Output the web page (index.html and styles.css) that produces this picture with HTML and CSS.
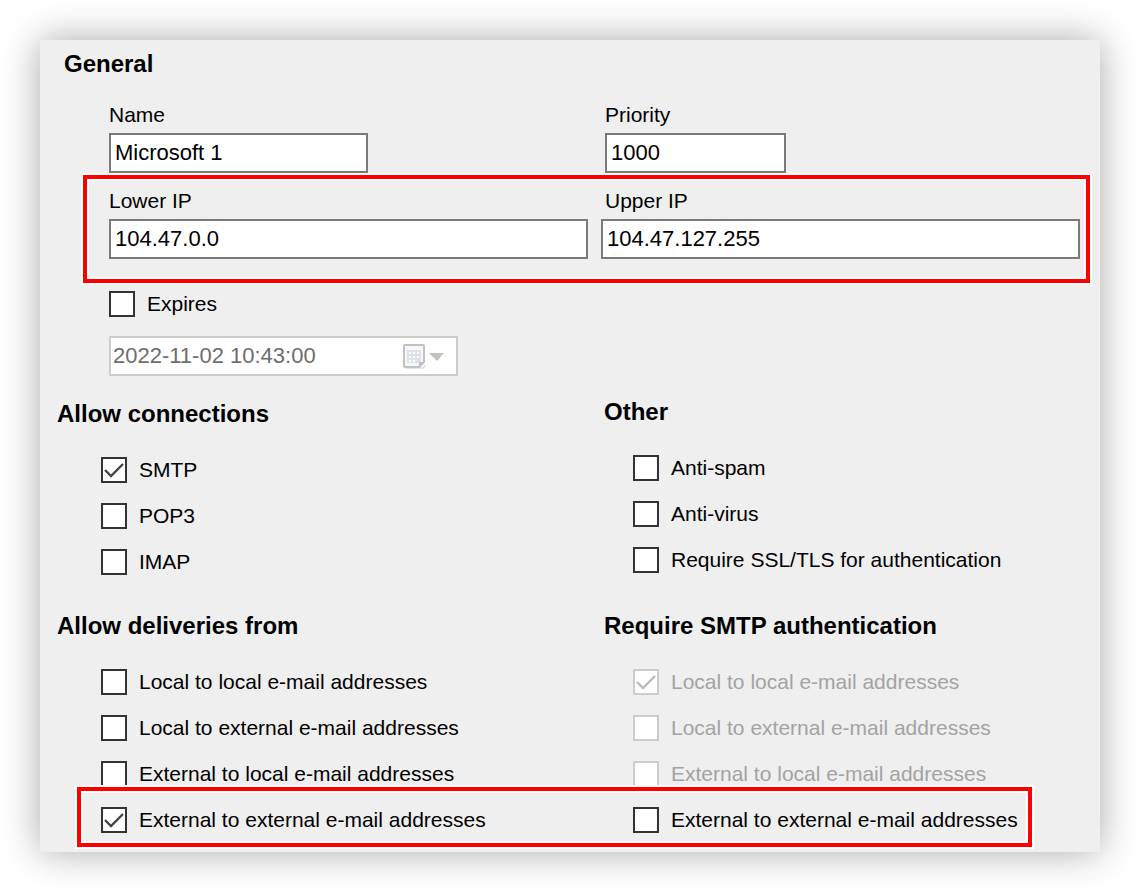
FILE: index.html
```html
<!DOCTYPE html>
<html lang="en">
<head>
  <meta charset="UTF-8">
  <title>IP range</title>
  <link rel="stylesheet" href="styles.css">
</head>
<body>

  <form class="panel">
    <section class="general">
      <h2 class="general-title">General</h2>
      <div class="general-body">
        <div class="field-row">
          <div class="field">
            <label for="name">Name</label>
            <input type="text" class="text-input name-input" id="name" value="Microsoft 1">
          </div>
          <div class="field priority">
            <label for="priority">Priority</label>
            <input type="text" class="text-input priority-input" id="priority" value="1000">
          </div>
        </div>

        <div class="field-row">
          <div class="field">
            <label for="lowerIp">Lower IP</label>
            <input type="text" class="text-input" id="lowerIp" value="104.47.0.0">
          </div>
          <div class="field">
            <label class="upper-label" for="upperIp">Upper IP</label>
            <input type="text" class="text-input" id="upperIp" value="104.47.127.255">
          </div>
          <div class="highlight highlight-ip"></div>
        </div>

        <div class="expires">
          <label class="check"><input type="checkbox"> Expires</label>
          <div class="date-box">
            <input type="text" class="date-input" value="2022-11-02 10:43:00" aria-label="Expiry date" disabled>
            <button type="button" class="date-btn" aria-label="Pick a date" disabled>
              <svg width="42" height="28" viewBox="0 0 42 28">
                <path d="M4 26h17l3-3" fill="none" stroke="#e3e3e3" stroke-width="2"/>
                <path d="M3 3h18q1 0 1 1v16l-5 5H3q-1 0-1-1V4q0-1 1-1z" fill="#f6f7fa" stroke="#c5c0c0" stroke-width="2"/>
                <path d="M5 8h14v13H5z" fill="#dde1ea"/>
                <path d="M7 10h2v2H7zM11 10h2v2h-2zM15 10h2v2h-2zM7 14h2v2H7zM11 14h2v2h-2zM15 14h2v2h-2zM7 18h2v2H7zM11 18h2v2h-2z" fill="#fff"/>
                <path d="M17 25v-5h5z" fill="#c5c0c0"/>
                <path d="M27 11h15l-7 8z" fill="#c3c3bb"/>
              </svg>
            </button>
          </div>
        </div>
      </div>
    </section>

    <div class="columns">
      <section class="group connections">
        <h2>Allow connections</h2>
        <div class="checks">
          <label class="check"><input type="checkbox" checked> SMTP</label>
          <label class="check"><input type="checkbox"> POP3</label>
          <label class="check"><input type="checkbox"> IMAP</label>
        </div>
      </section>
      <section class="group">
        <h2>Other</h2>
        <div class="checks checks-right">
          <label class="check"><input type="checkbox"> Anti-spam</label>
          <label class="check"><input type="checkbox"> Anti-virus</label>
          <label class="check"><input type="checkbox"> Require SSL/TLS for authentication</label>
        </div>
      </section>
    </div>

    <div class="columns deliveries">
      <section class="group">
        <h2>Allow deliveries from</h2>
        <div class="checks">
          <label class="check"><input type="checkbox"> Local to local e-mail addresses</label>
          <label class="check"><input type="checkbox"> Local to external e-mail addresses</label>
          <label class="check"><input type="checkbox"> External to local e-mail addresses</label>
          <label class="check"><input type="checkbox" checked> External to external e-mail addresses</label>
        </div>
      </section>
      <section class="group">
        <h2>Require SMTP authentication</h2>
        <div class="checks checks-right">
          <label class="check disabled"><input type="checkbox" checked disabled> Local to local e-mail addresses</label>
          <label class="check disabled"><input type="checkbox" disabled> Local to external e-mail addresses</label>
          <label class="check disabled"><input type="checkbox" disabled> External to local e-mail addresses</label>
          <label class="check"><input type="checkbox"> External to external e-mail addresses</label>
        </div>
      </section>
      <div class="highlight highlight-external"></div>
    </div>
  </form>

</body>
</html>
```
FILE: styles.css
```css
* {
  box-sizing: border-box;
}

body {
  margin: 0;
  padding: 40px;
  background: #fff;
  color: #000;
  font-family: "Liberation Sans", Arial, sans-serif;
  font-size: 21px;
  line-height: 28px;
}

.panel {
  padding: 8px 20px 19px 17px;
  background: #efefef;
  box-shadow: 0 0 36px rgba(0, 0, 0, 0.34);
}

h2 {
  margin: 0;
  font-size: 24px;
  line-height: 32px;
  font-weight: bold;
}

.general-title {
  padding-left: 7px;
}

.general-body {
  display: flex;
  flex-direction: column;
  gap: 14px;
  padding: 21px 0 0 52px;
}

.field-row {
  position: relative;
  display: grid;
  grid-template-columns: 1fr 1fr;
  gap: 13px;
}

.field {
  display: flex;
  flex-direction: column;
  gap: 4px;
}

.priority,
.upper-label {
  padding-left: 4px;
}

.text-input {
  width: 100%;
  height: 40px;
  padding: 0 4px;
  border: 2px solid #7a7a7a;
  background: #fff;
  color: #000;
  font: inherit;
  font-size: 22px;
}

.name-input {
  max-width: 259px;
}

.priority-input {
  max-width: 181px;
}

/* red frames drawn over the form */
.highlight {
  position: absolute;
  border: 4px solid #f00;
  box-shadow: 0 0 0 2px #fff, inset 0 0 0 2px #fff;
  pointer-events: none;
}

.highlight-ip {
  top: -12px;
  right: -10px;
  bottom: -24px;
  left: -26px;
}

.highlight-external {
  right: 48px;
  bottom: -14px;
  left: 20px;
  height: 60px;
}

.expires {
  display: flex;
  flex-direction: column;
  gap: 19px;
  padding-top: 18px;
}

.check {
  display: flex;
  align-items: center;
  gap: 12px;
  height: 26px;
}

.check input {
  appearance: none;
  width: 26px;
  height: 26px;
  margin: 0;
  border: 2px solid #333;
  background: #fff;
}

.check input:checked {
  background: #fff url("data:image/svg+xml,%3Csvg xmlns='http://www.w3.org/2000/svg' viewBox='0 0 22 22'%3E%3Cpath d='M2 11l6 6L20 5' fill='none' stroke='%23444' stroke-width='2.4'/%3E%3C/svg%3E") center / 22px no-repeat;
}

.disabled {
  color: #a3a3a3;
}

.check input:disabled {
  border-color: #ccc;
}

.check input:checked:disabled {
  background-image: url("data:image/svg+xml,%3Csvg xmlns='http://www.w3.org/2000/svg' viewBox='0 0 22 22'%3E%3Cpath d='M2 11l6 6L20 5' fill='none' stroke='%23bbb' stroke-width='2.4'/%3E%3C/svg%3E");
}

.date-box {
  display: flex;
  align-items: center;
  width: 349px;
  height: 40px;
  padding: 0 12px 0 2px;
  border: 2px solid #ccc;
  background: #fff;
}

.date-input {
  flex: 1;
  min-width: 0;
  padding: 0;
  border: none;
  background: none;
  color: #6d6d6d;
  font: inherit;
  font-size: 22px;
}

.date-btn {
  display: flex;
  padding: 0;
  border: none;
  background: none;
}

.columns {
  position: relative;
  display: grid;
  grid-template-columns: 547fr 476fr;
  padding-top: 20px;
}

.connections {
  padding-top: 2px;
}

.deliveries {
  padding-top: 35px;
}

.checks {
  display: flex;
  flex-direction: column;
  gap: 20px;
  padding: 27px 0 0 44px;
}

.checks-right {
  padding-left: 29px;
}
```
